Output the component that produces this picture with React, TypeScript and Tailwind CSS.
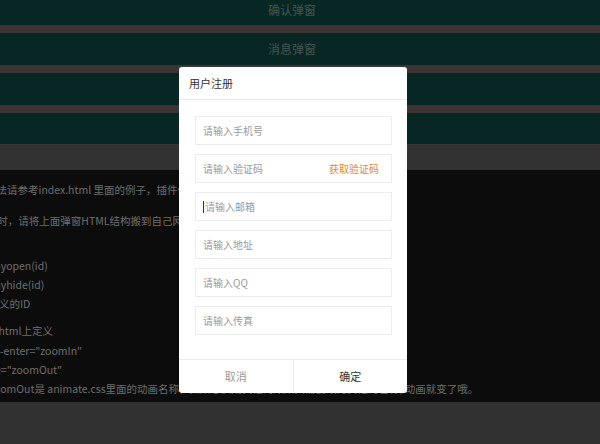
import React from "react";

// ── Background page (dimmed by the open modal) ─────────────────────────────
const bars = [
    { label: "确认弹窗", h: "h-[25px] pb-[5px]" },
    { label: "消息弹窗", h: "h-[32px]" },
    { label: "加载弹窗", h: "h-[32px]" },
    { label: "注册弹窗", h: "h-[31px]" },
];

const fields = ["请输入手机号", "请输入验证码", "请输入邮箱", "请输入地址", "请输入QQ", "请输入传真"];

function Field({ placeholder, index }: { placeholder: string; index: number }) {
    return (
        <div className="flex h-[29px] items-center border border-[#ececec] bg-white pl-[7px] pr-[12px] text-[10px] text-[#9a9a9a]">
            {/* focused field shows a caret */}
            {index === 2 && <span className="mr-[1px] h-[12px] w-px bg-[#333]" />}
            <span className="flex-1">{placeholder}</span>
            {index === 1 && <span className="text-[#e0892f]">获取验证码</span>}
        </div>
    );
}

export default function App() {
    return (
        <div className="relative flex h-[444px] w-[600px] flex-col overflow-hidden bg-[#3d3533] font-['Noto_Sans_CJK_SC','Noto_Sans',sans-serif]">
            {/* Demo buttons */}
            <div className="flex flex-col gap-[8px]">
                {bars.map((b) => (
                    <div key={b.label} className={`${b.h} flex items-center justify-center bg-[#072624] pr-[16px] text-[12px] text-[#46574f]`}>
                        {b.label}
                    </div>
                ))}
            </div>
            <div className="mt-[1px] h-[25px] bg-[#323232]" />

            {/* Readme text */}
            <div className="h-[232px] overflow-hidden bg-[#0c0c0c] text-[10.5px] leading-[19px] whitespace-nowrap text-[#6e6e6e]">
                <p className="ml-[-35px] mt-[10px]">使用方法请参考index.html 里面的例子，插件依赖jquery和animate.css</p>
                <p className="ml-[-40px] mt-[12px]">2、使用时，请将上面弹窗HTML结构搬到自己网页中</p>
                <p className="ml-[-9px] mt-[26px]">myopen(id)</p>
                <p className="ml-[-9px]">myhide(id)</p>
                <p className="ml-[-42px]">id为自定义的ID</p>
                <p className="ml-[-12px] mt-[8px]">在html上定义</p>
                <p className="ml-[-22px] mt-[1px]">data-enter="zoomIn"</p>
                <p className="ml-[-5px]">e="zoomOut"</p>
                <p className="ml-[-11px]">zoomOut是 animate.css里面的动画名称，如果想换成其他的效果只需要改为其他的名称, 动画就变了哦。</p>
            </div>
            <div className="flex-1 bg-[#313131]" />

            {/* ── Register modal ── */}
            <div className="absolute left-[179px] top-[67px] flex w-[228px] flex-col overflow-hidden rounded-[3px] bg-white">
                <div className="flex h-[33px] items-center border-b border-[#e8e8e8] pl-[10px] text-[11px] text-[#333]">用户注册</div>
                <div className="flex flex-col gap-[9px] pb-[24px] pl-[16px] pr-[15px] pt-[16px]">
                    {fields.map((f, i) => (
                        <Field key={f} placeholder={f} index={i} />
                    ))}
                </div>
                <div className="flex h-[34px] border-t border-[#ececec] text-[11px]">
                    <button className="flex-1 text-[#9a9a9a]">取消</button>
                    <button className="flex-1 border-l border-[#ececec] text-[#333]">确定</button>
                </div>
            </div>
        </div>
    );
}
